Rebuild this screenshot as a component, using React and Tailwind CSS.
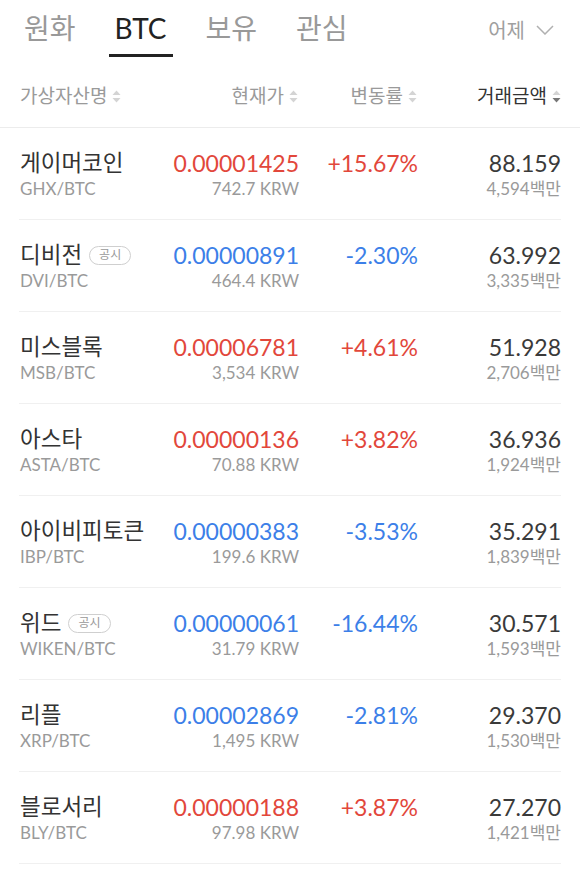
import { useState } from "react";

const coins = [
  { name: "게이머코인", pair: "GHX/BTC", price: "0.00001425", krw: "742.7 KRW", change: "+15.67%", vol: "88.159", mil: "4,594", up: true },
  { name: "디비전", pair: "DVI/BTC", price: "0.00000891", krw: "464.4 KRW", change: "-2.30%", vol: "63.992", mil: "3,335", up: false, notice: true },
  { name: "미스블록", pair: "MSB/BTC", price: "0.00006781", krw: "3,534 KRW", change: "+4.61%", vol: "51.928", mil: "2,706", up: true },
  { name: "아스타", pair: "ASTA/BTC", price: "0.00000136", krw: "70.88 KRW", change: "+3.82%", vol: "36.936", mil: "1,924", up: true },
  { name: "아이비피토큰", pair: "IBP/BTC", price: "0.00000383", krw: "199.6 KRW", change: "-3.53%", vol: "35.291", mil: "1,839", up: false },
  { name: "위드", pair: "WIKEN/BTC", price: "0.00000061", krw: "31.79 KRW", change: "-16.44%", vol: "30.571", mil: "1,593", up: false, notice: true },
  { name: "리플", pair: "XRP/BTC", price: "0.00002869", krw: "1,495 KRW", change: "-2.81%", vol: "29.370", mil: "1,530", up: false },
  { name: "블로서리", pair: "BLY/BTC", price: "0.00000188", krw: "97.98 KRW", change: "+3.87%", vol: "27.270", mil: "1,421", up: true },
];

const tabs = ["원화", "BTC", "보유", "관심"];

// little up/down triangles next to the column titles
const SortIcon = ({ active }) => (
  <svg width="9" height="13" viewBox="0 0 9 13" className="ml-[5px]">
    <path d="M4.5 0.5 L8.5 5 L0.5 5 Z" fill="#d4d4d4" />
    <path d="M4.5 12.5 L8.5 8 L0.5 8 Z" fill={active ? "#777" : "#d4d4d4"} />
  </svg>
);

const App = () => {
  const [tab, setTab] = useState("BTC");

  return (
    <div className="w-[580px] h-[886px] bg-white overflow-hidden" style={{ fontFamily: "Lato, 'Noto Sans CJK KR', sans-serif" }}>
      <div className="flex items-start h-[57px] pl-[18px] pr-[26px]">
        {tabs.map((t) => (
          <button
            key={t}
            onClick={() => setTab(t)}
            className={`px-[6px] mr-[27px] h-[57px] pt-[2px] text-[28px] leading-[40px] border-b-[3px] ${tab === t ? "border-[#222] text-[#222]" : "border-transparent text-[#999]"}`}
          >
            {t}
          </button>
        ))}
        <div className="ml-auto flex items-center pt-[13px] text-[20px] leading-[34px] text-[#a0a0a0]">
          어제
          <svg width="18" height="10" viewBox="0 0 18 10" className="ml-[11px]">
            <path d="M1 1 L9 9 L17 1" stroke="#b0b0b0" strokeWidth="1.5" fill="none" />
          </svg>
        </div>
      </div>

      <div className="grid grid-cols-[150px_129px_119px_1fr] px-[19px] pr-[19px] h-[71px] items-center border-b border-[#ececec] text-[19px] text-[#9a9a9a] pt-[9px]">
        <div className="flex items-center pl-[1px]">가상자산명<SortIcon /></div>
        <div className="flex items-center justify-end">현재가<SortIcon /></div>
        <div className="flex items-center justify-end">변동률<SortIcon /></div>
        <div className="flex items-center justify-end text-[#333]">거래금액<SortIcon active /></div>
      </div>

      {coins.map((c) => {
        const color = c.up ? "text-[#e2473b]" : "text-[#3c7fe8]";
        return (
          <div key={c.pair} className="mx-[19px] border-b border-[#f0f0f0] h-[92px] pt-[22px]">
            <div className="grid grid-cols-[150px_130px_119px_1fr]">
              <div className="pl-[1px]">
                <div className="flex items-center text-[22.5px] leading-[26px] text-[#333]">
                  {c.name}
                  {c.notice && (
                    <span className="ml-[7px] px-[9px] h-[19px] flex items-center rounded-full border border-[#cfcfcf] text-[12px] text-[#999]">
                      공시
                    </span>
                  )}
                </div>
                <div className="text-[17px] leading-[26px] text-[#9a9a9a]">{c.pair}</div>
              </div>
              <div className="text-right">
                <div className={`text-[23px] leading-[26px] ${color}`}>{c.price}</div>
                <div className="text-[17px] leading-[26px] text-[#9a9a9a]">{c.krw}</div>
              </div>
              <div className={`text-right text-[23px] leading-[26px] ${color}`}>{c.change}</div>
              <div className="text-right">
                <div className="text-[23px] leading-[26px] text-[#3a3a3a]">{c.vol}</div>
                <div className="text-[17px] leading-[26px] text-[#9a9a9a]">{c.mil}백만</div>
              </div>
            </div>
          </div>
        );
      })}
    </div>
  );
};

export default App;
